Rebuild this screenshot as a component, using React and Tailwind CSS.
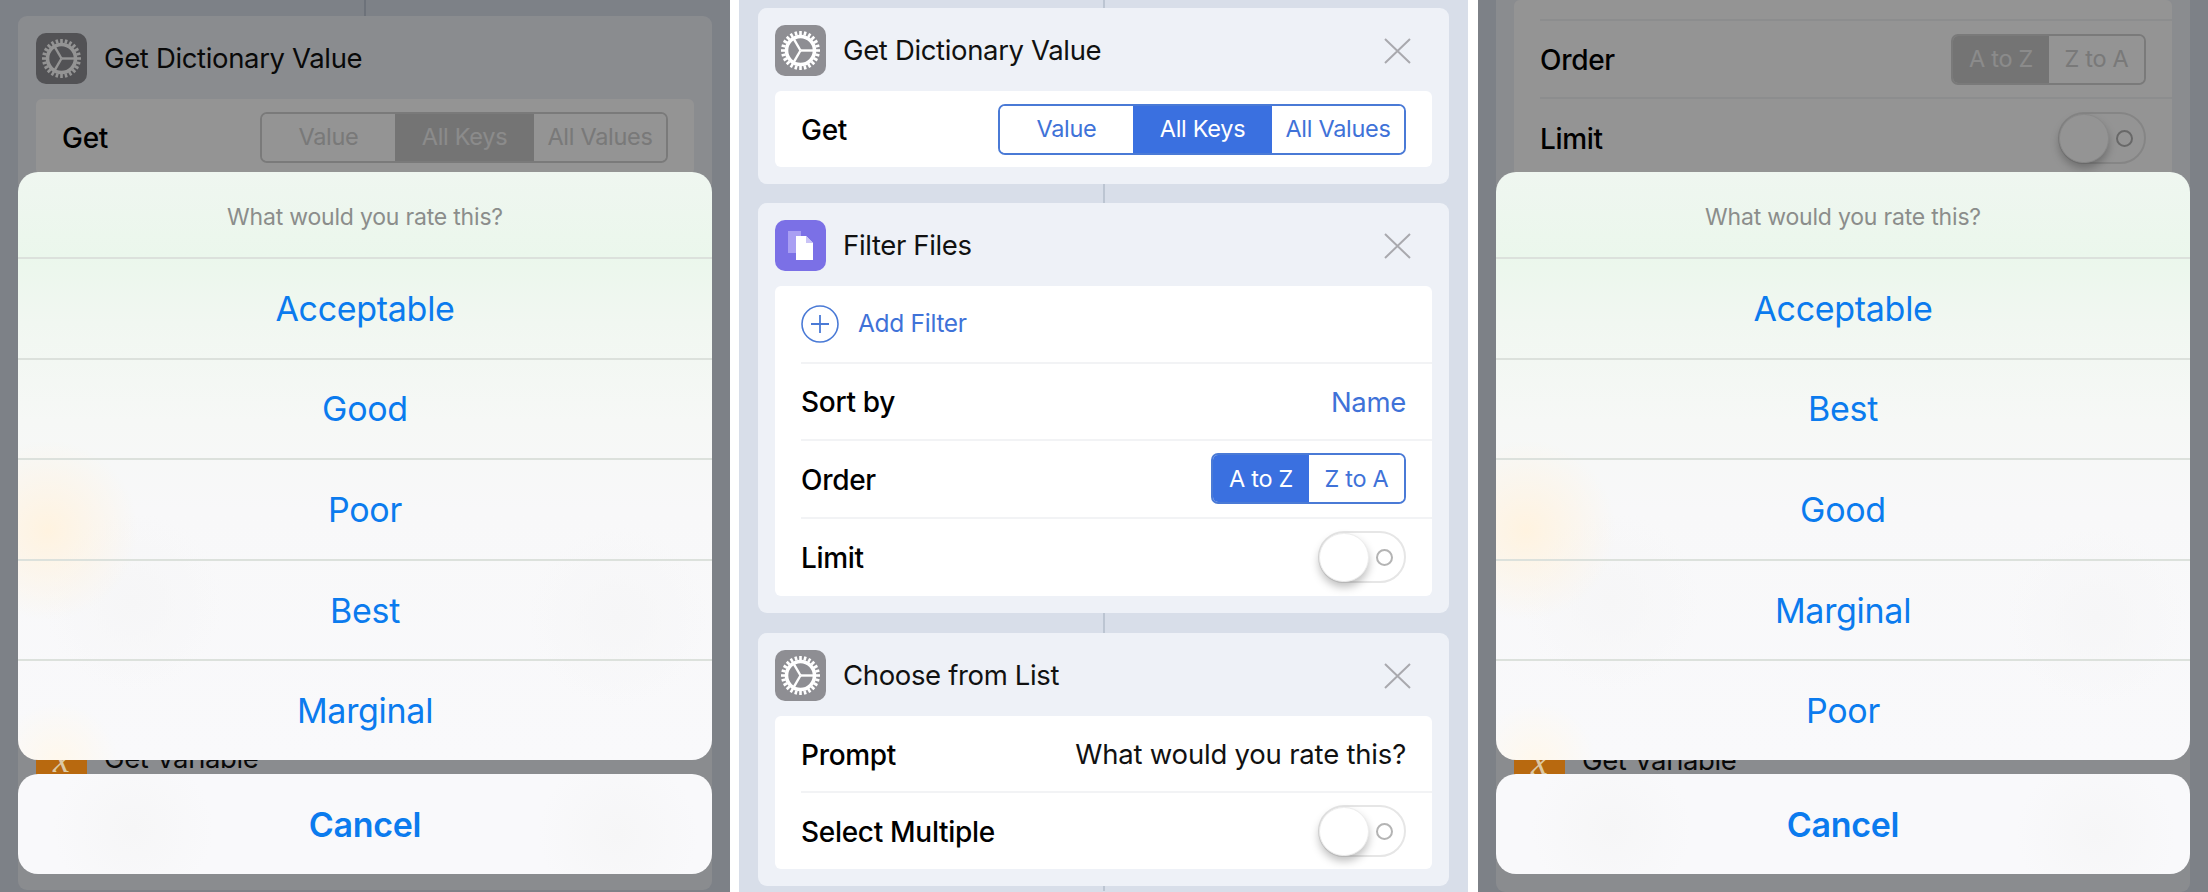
import React from 'react';

const Gear = () => (
  <svg viewBox="0 0 51 51" className="w-[51px] h-[51px]">
    <g stroke="#fff" fill="none">
      <circle cx="25.5" cy="25.5" r="14" strokeWidth="3.6" />
      {Array.from({ length: 24 }).map((_, i) => (
        <line key={i} x1="25.5" y1="10" x2="25.5" y2="6" strokeWidth="2.6" transform={`rotate(${i * 15} 25.5 25.5)`} />
      ))}
      {[90, 210, 330].map((a) => (
        <line key={a} x1="25.5" y1="25.5" x2="25.5" y2="12" strokeWidth="2.4" transform={`rotate(${a} 25.5 25.5)`} />
      ))}
    </g>
  </svg>
);

const FilesIcon = () => (
  <svg viewBox="0 0 51 51" className="w-[51px] h-[51px]">
    <rect x="13" y="11" width="13" height="22" fill="#a99ff3" />
    <path d="M21 16h10l7 7v17H21z" fill="#fff" />
    <path d="M31 16l7 7h-7z" fill="#c9c3f7" />
  </svg>
);

const CloseX = () => (
  <svg viewBox="0 0 27 26" className="w-[27px] h-[26px]">
    <path d="M1 1l25 24M26 1L1 25" stroke="#a9a9ae" strokeWidth="2" fill="none" />
  </svg>
);

const PlusCircle = () => (
  <svg viewBox="0 0 38 38" className="w-[38px] h-[38px]">
    <circle cx="19" cy="19" r="18" stroke="#4a7ad6" strokeWidth="1.6" fill="none" />
    <path d="M19 10v18M10 19h18" stroke="#4a7ad6" strokeWidth="1.8" fill="none" />
  </svg>
);

const Connector = ({ h }) => <div className={`${h} w-[2px] mx-auto bg-[#bcc5d2]`} />;

const Card = ({ icon, iconBg, title, onClose = true, children, className = '' }) => (
  <div className={`rounded-[9px] bg-[#eef1f7] p-[17px] ${className}`}>
    <div className="flex items-center h-[51px] mb-[15px]">
      <div className={`w-[51px] h-[51px] rounded-[10px] flex items-center justify-center ${iconBg}`}>{icon}</div>
      <div className="ml-[17px] pt-[1px] text-[27.5px] text-[#111] tracking-[-0.35px]">{title}</div>
      {onClose && <div className="ml-auto mr-[21px] flex"><CloseX /></div>}
    </div>
    {children}
  </div>
);

const Rows = ({ children }) => <div className="bg-white rounded-[6px] overflow-hidden">{children}</div>;

const Row = ({ label, last, h = 'h-[77px]', children }) => (
  <div className="pl-[26px]">
    <div className={`${h} pr-[26px] flex items-center justify-between ${last ? '' : 'border-b-2 border-[#f2f3f5]'}`}>
      {label && <span className="pt-[2px] text-[28px] font-medium text-black tracking-[-0.3px]">{label}</span>}
      {children}
    </div>
  </div>
);

const Segment = ({ items, widths, active, dim }) => (
  <div className={`flex h-[51px] rounded-[7px] border-2 overflow-hidden ${dim ? 'border-[#d2d2d2]' : 'border-[#4a7ad6]'}`}>
    {items.map((t, i) => {
      const on = i === active;
      let cls = on ? 'bg-[#3a70e0] text-white' : 'bg-white text-[#3f72d8]';
      if (dim) cls = on ? 'bg-[#c8c8c8] text-[#f0f0f0]' : 'bg-white text-[#d0d0d0]';
      return (
        <div key={t} className={`flex items-center justify-center text-[23.5px] tracking-[-0.3px] ${widths[i]} ${cls}`}>{t}</div>
      );
    })}
  </div>
);

const Toggle = () => (
  <div className="relative w-[88px] h-[52px] rounded-full border-2 border-[#e6e6e6] bg-white flex items-center justify-end pr-[11px]">
    <div className="w-[17px] h-[17px] rounded-full border-2 border-[#b4b4b4]" />
    <div className="absolute left-[-1px] top-[0px] w-[50px] h-[49px] rounded-full bg-white border border-[#ececec] shadow-[0_5px_8px_rgba(0,0,0,0.25)]" />
  </div>
);

const GetVariable = () => (
  <Card
    onClose={false}
    className="h-[174px] px-[18px]"
    iconBg="relative z-10 bg-[#b8690f]"
    icon={<span className="font-['Liberation_Serif',serif] italic text-[38px] text-[#dcc9a6] leading-none">x</span>}
    title="Get Variable"
  />
);

const ActionSheet = ({ options }) => (
  <div className="absolute z-20 left-[18px] w-[694px] top-[172px] flex flex-col gap-[14px]">
    <div className="h-[588px] rounded-[20px] overflow-hidden flex flex-col bg-[radial-gradient(circle_at_30px_358px,#fff3e0_0,transparent_90px),radial-gradient(circle_at_40px_590px,#fff8ec_0,transparent_60px),radial-gradient(circle_at_115px_430px,#f6f6f7_0,transparent_90px),radial-gradient(circle_at_600px_445px,#f6f6f7_0,transparent_90px),linear-gradient(180deg,#eff6f0_0,#ebf7ec_85px,#f1f7f1_150px,#f6f8f6_250px,#f8f8f9_340px,#f9f9fb_100%)]">
      <div className="h-[85px] pt-[5px] flex items-center justify-center text-[23px] text-[#8b8d8b] tracking-[-0.2px]">What would you rate this?</div>
      {options.map((o) => (
        <div key={o} className="flex-1 flex items-center justify-center text-[34px] text-[#0b7bee] tracking-[-0.3px] border-t-2 border-[#dce1dc]">{o}</div>
      ))}
    </div>
    <div className="h-[100px] rounded-[20px] flex items-center justify-center text-[34px] font-semibold text-[#0b7bee] tracking-[-0.3px] bg-[radial-gradient(circle_at_115px_55px,#f6f6f7_0,transparent_80px),radial-gradient(circle_at_600px_60px,#f6f6f7_0,transparent_80px),linear-gradient(#f9f9fb,#f9f9fb)]">Cancel</div>
  </div>
);

const Overlay = () => <div className="absolute inset-0 bg-black/[0.42]" />;

export default function App() {
  return (
    <div className="flex w-[2208px] h-[892px] bg-white font-['Inter',sans-serif]">
      {/* left screen */}
      <div className="relative w-[730px] h-[892px] overflow-hidden bg-[#d8dee9]">
        <div className="px-[18px]">
          <Connector h="h-[16px]" />
          <Card className="px-[18px]" onClose={false} iconBg="bg-[#8e8e93]" icon={<Gear />} title="Get Dictionary Value">
            <Rows>
              <Row label="Get" h="h-[76px]" last>
                <Segment dim items={['Value', 'All Keys', 'All Values']} widths={['w-[133px]', 'w-[139px]', 'w-[132px]']} active={1} />
              </Row>
            </Rows>
          </Card>
          <div className="h-[524px]" />
          <GetVariable />
        </div>
        <Overlay />
        <ActionSheet options={['Acceptable', 'Good', 'Poor', 'Best', 'Marginal']} />
      </div>

      {/* middle screen */}
      <div className="ml-[9px] mr-[10px] w-[729px] h-[892px] overflow-hidden bg-[#d8dee9] px-[19px]">
        <Connector h="h-[8px]" />
        <Card iconBg="bg-[#8e8e93]" icon={<Gear />} title="Get Dictionary Value">
          <Rows>
            <Row label="Get" h="h-[76px]" last>
              <Segment items={['Value', 'All Keys', 'All Values']} widths={['w-[133px]', 'w-[139px]', 'w-[132px]']} active={1} />
            </Row>
          </Rows>
        </Card>
        <Connector h="h-[19px]" />
        <Card iconBg="bg-[#7b70e6]" icon={<FilesIcon />} title="Filter Files">
          <Rows>
            <Row h="h-[77.5px]">
              <div className="flex items-center">
                <PlusCircle />
                <span className="ml-[19px] text-[24.5px] text-[#3f72d8] tracking-[-0.3px]">Add Filter</span>
              </div>
            </Row>
            <Row label="Sort by" h="h-[77.5px]">
              <span className="pt-[2px] text-[27.5px] text-[#3f72d8] tracking-[-0.3px]">Name</span>
            </Row>
            <Row label="Order" h="h-[77.5px]">
              <Segment items={['A to Z', 'Z to A']} widths={['w-[96px]', 'w-[95px]']} active={0} />
            </Row>
            <Row label="Limit" h="h-[77.5px]" last>
              <Toggle />
            </Row>
          </Rows>
        </Card>
        <Connector h="h-[20px]" />
        <Card iconBg="bg-[#8e8e93]" icon={<Gear />} title="Choose from List">
          <Rows>
            <Row label="Prompt" h="h-[77px]">
              <span className="pt-[2px] text-[27.5px] text-[#111] tracking-[-0.2px]">What would you rate this?</span>
            </Row>
            <Row label="Select Multiple" h="h-[76px]" last>
              <Toggle />
            </Row>
          </Rows>
        </Card>
        <Connector h="h-[5px]" />
      </div>

      {/* right screen */}
      <div className="relative w-[730px] h-[892px] overflow-hidden bg-[#d8dee9]">
        <div className="px-[18px]">
          <div className="bg-[#eef1f7] rounded-b-[9px] px-[18px] pb-[18px]">
            <Rows>
              <Row h="h-[21px]" />
              <Row label="Order" h="h-[78px]">
                <Segment dim items={['A to Z', 'Z to A']} widths={['w-[96px]', 'w-[95px]']} active={0} />
              </Row>
              <Row label="Limit" h="h-[78px]" last>
                <Toggle />
              </Row>
            </Rows>
          </div>
          <div className="h-[523px]" />
          <GetVariable />
        </div>
        <Overlay />
        <ActionSheet options={['Acceptable', 'Best', 'Good', 'Marginal', 'Poor']} />
      </div>
    </div>
  );
}
